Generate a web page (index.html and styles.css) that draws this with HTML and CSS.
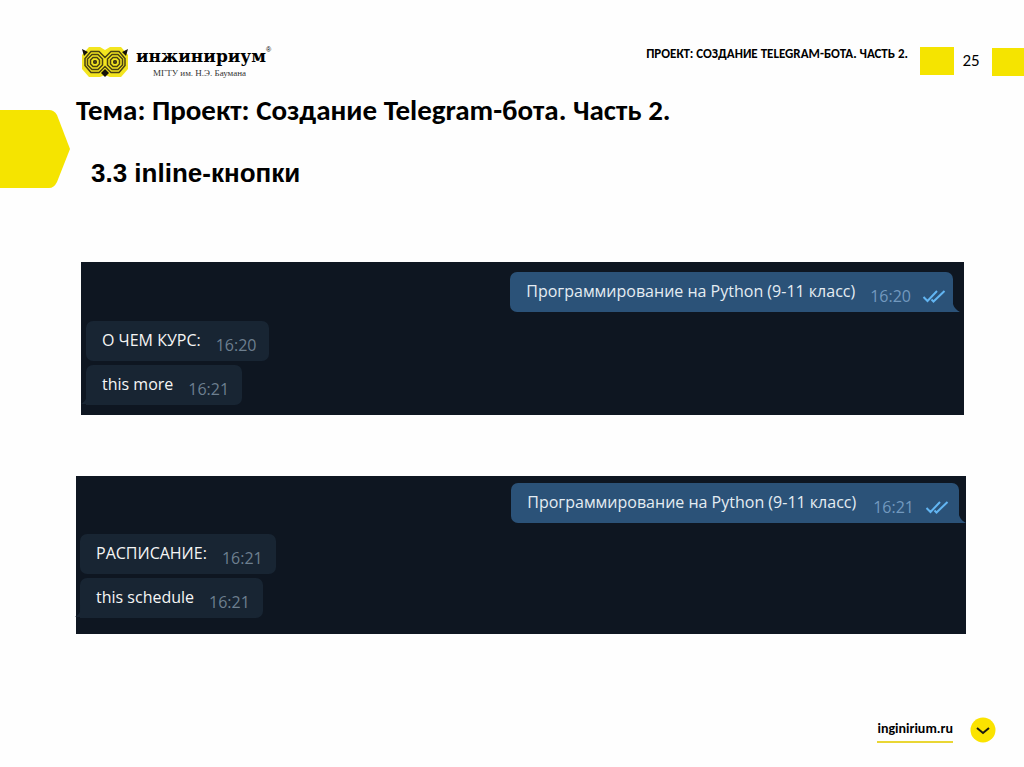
FILE: index.html
```html
<!DOCTYPE html>
<html lang="ru">
<head>
<meta charset="utf-8">
<meta name="viewport" content="width=device-width, initial-scale=1">
<title>Проект: Создание Telegram-бота. Часть 2.</title>
<link rel="stylesheet" href="styles.css">
</head>
<body>
<svg class="defs" aria-hidden="true">
  <symbol id="checks" viewBox="0 0 24 14">
    <path d="M1.500 8 5.500 12 15 2M9.500 10.500 11.500 12.500 22.500 2" fill="none" stroke="#62b5f2" stroke-width="2"/>
  </symbol>
  <symbol id="tail" viewBox="0 0 8 16">
    <path d="M0 0C0 8 2 13 8 16H0Z" fill="currentColor"/>
  </symbol>
</svg>
<div class="slide">
  <header class="top">
    <div class="brand">
      <svg class="owl" viewBox="0 0 48 32" aria-hidden="true">
        <path d="M8 1H19L24 4 29 1H40L47 9V23L40 31H29L24 29 19 31H8L1 23V9Z" fill="#f3e51f"/>
        <g fill="none" stroke="#4a4212" stroke-width="1.500">
          <path d="M10 5.500H18L24 11.500 30 5.500H38L44 12.500V19.500L38 26.500H30L24 20.500 18 26.500H10L4 19.500V12.500Z"/>
          <path d="M11 8.500H17L21.500 13V19L17 23.500H11L6.500 19V13ZM31 8.500H37L41.500 13V19L37 23.500H31L26.500 19V13Z"/>
          <path d="M12 11.500H16L18.500 14V18L16 20.500H12L9.500 18V14ZM32 11.500H36L38.500 14V18L36 20.500H32L29.500 18V14Z"/>
        </g>
        <path d="M13 14H15L16 15V17L15 18H13L12 17V15ZM33 14H35L36 15V17L35 18H33L32 17V15Z" fill="#4a4212"/>
        <path d="M1 3 7 6 3 10ZM47 3 41 6 45 10ZM24 23 28 27 24 31 20 27Z" fill="#17130a"/>
      </svg>
      <div class="wordmark">
        <span class="name">инжинириум<sup>®</sup></span>
        <span class="sub">МГТУ им. Н.Э. Баумана</span>
      </div>
    </div>
    <p class="running">ПРОЕКТ: СОЗДАНИЕ TELEGRAM-БОТА. ЧАСТЬ 2.</p>
    <span class="block"></span>
    <span class="page">25</span>
    <span class="block edge"></span>
  </header>

  <main>
    <div class="titles">
      <svg class="marker" viewBox="0 0 70 78" aria-hidden="true">
        <path d="M0 0H49Q54 0 57 5L70 39 57 72Q54 78 49 78H0Z" fill="#f5e400"/>
      </svg>
      <div>
        <h1>Тема: Проект: Создание Telegram-бота. Часть 2.</h1>
        <h2>3.3 inline-кнопки</h2>
      </div>
    </div>

    <section class="chat first">
      <div class="msg out">Программирование на Python (9-11 класс)<time>16:20</time><svg class="checks"><use href="#checks"/></svg><svg class="tail"><use href="#tail"/></svg></div>
      <div class="msg">О ЧЕМ КУРС:<time>16:20</time></div>
      <div class="msg last">this more<time>16:21</time><svg class="tail"><use href="#tail"/></svg></div>
    </section>

    <section class="chat second">
      <div class="msg out">Программирование на Python (9-11 класс)<time>16:21</time><svg class="checks"><use href="#checks"/></svg><svg class="tail"><use href="#tail"/></svg></div>
      <div class="msg">РАСПИСАНИЕ:<time>16:21</time></div>
      <div class="msg last">this schedule<time>16:21</time><svg class="tail"><use href="#tail"/></svg></div>
    </section>
  </main>

  <footer class="bottom">
    <a class="site" href="#">inginirium.ru</a>
    <svg class="arrow" viewBox="0 0 26 26" aria-hidden="true">
      <circle cx="13" cy="13" r="12.500" fill="#fbe300"/>
      <path d="M7 11 13 16 19 11" fill="none" stroke="#1c1a10" stroke-width="2"/>
    </svg>
  </footer>
</div>
</body>
</html>
```
FILE: styles.css
```css
* { box-sizing: border-box; }
body {
  margin: 0;
  background: #fefefe;
  color: #000;
  font-family: Carlito, Lato, "Open Sans", sans-serif;
}
.defs { position: absolute; width: 0; height: 0; }
.slide { min-height: 100vh; display: flex; flex-direction: column; }

.top { display: flex; align-items: flex-start; height: 94px; padding: 46px 0 0 81px; }
.brand { display: flex; gap: 7px; margin-right: auto; }
.owl { width: 48px; height: 32px; }
.wordmark { display: flex; flex-direction: column; }
.name { font: bold 17px/20px "DejaVu Serif", serif; }
.name sup { font: 7px/8px "Liberation Sans", sans-serif; vertical-align: 10px; }
.sub { padding-left: 17px; font: 9px/14px "Liberation Serif", serif; color: #333; }
.running { margin: 0; font-size: 13px; line-height: 16px; font-weight: bold; }
.block { width: 34px; height: 28px; margin: 1px 0 0 12px; background: #f5e400; }
.page { width: 38px; padding: 4px 4px 0 0; text-align: center; font-size: 17px; line-height: 22px; }
.edge { width: 32px; margin: 2px 0 0; }

.titles { display: flex; gap: 6px; height: 168px; }
.marker { width: 70px; height: 78px; margin-top: 16px; flex: none; }
h1 { margin: 0; font-size: 29px; line-height: 32px; }
h2 { margin: 30px 0 0 15px; font: bold 26px/34px "Liberation Sans", Arial, sans-serif; }

.chat {
  display: flex;
  flex-direction: column;
  align-items: flex-start;
  gap: 4px;
  background: #0e1621;
  font-family: "Open Sans", "Noto Sans", sans-serif;
}
.first { margin: 0 60px 0 81px; padding: 10px 11px 10px 5px; }
.second { margin: 61px 58px 0 76px; padding: 7px 7px 16px 4px; }
.msg {
  position: relative;
  display: flex;
  padding: 7px 13px 9px 16px;
  border-radius: 7px;
  background: #182533;
  color: #f5f5f5;
  font-size: 16px;
  line-height: 24px;
}
.msg time { margin: 5px 0 -5px 15px; color: #6d7f8f; }
.out { align-self: flex-end; margin-bottom: 5px; padding-right: 7px; border-bottom-right-radius: 0; background: #2b5278; color: #e4ecf2; }
.out time { color: #7299bf; }
.last { border-bottom-left-radius: 0; }
.second .out { margin-bottom: 7px; padding-right: 10px; }
.second .out time { margin-left: 17px; }
.checks { width: 24px; height: 14px; margin: 10px 0 0 11px; }
.tail { position: absolute; bottom: 0; left: -5px; width: 6px; height: 14px; color: #182533; transform: scaleX(-1); }
.out .tail { left: auto; right: -7px; width: 8px; height: 16px; color: #2b5278; transform: none; }

.bottom { display: flex; justify-content: flex-end; align-items: center; gap: 17px; margin-top: auto; padding: 0 28px 24px 0; }
.site { border-bottom: 2px solid #e9d634; color: #000; font-size: 14px; line-height: 24px; font-weight: bold; text-decoration: none; }
.arrow { width: 26px; height: 26px; }
```
